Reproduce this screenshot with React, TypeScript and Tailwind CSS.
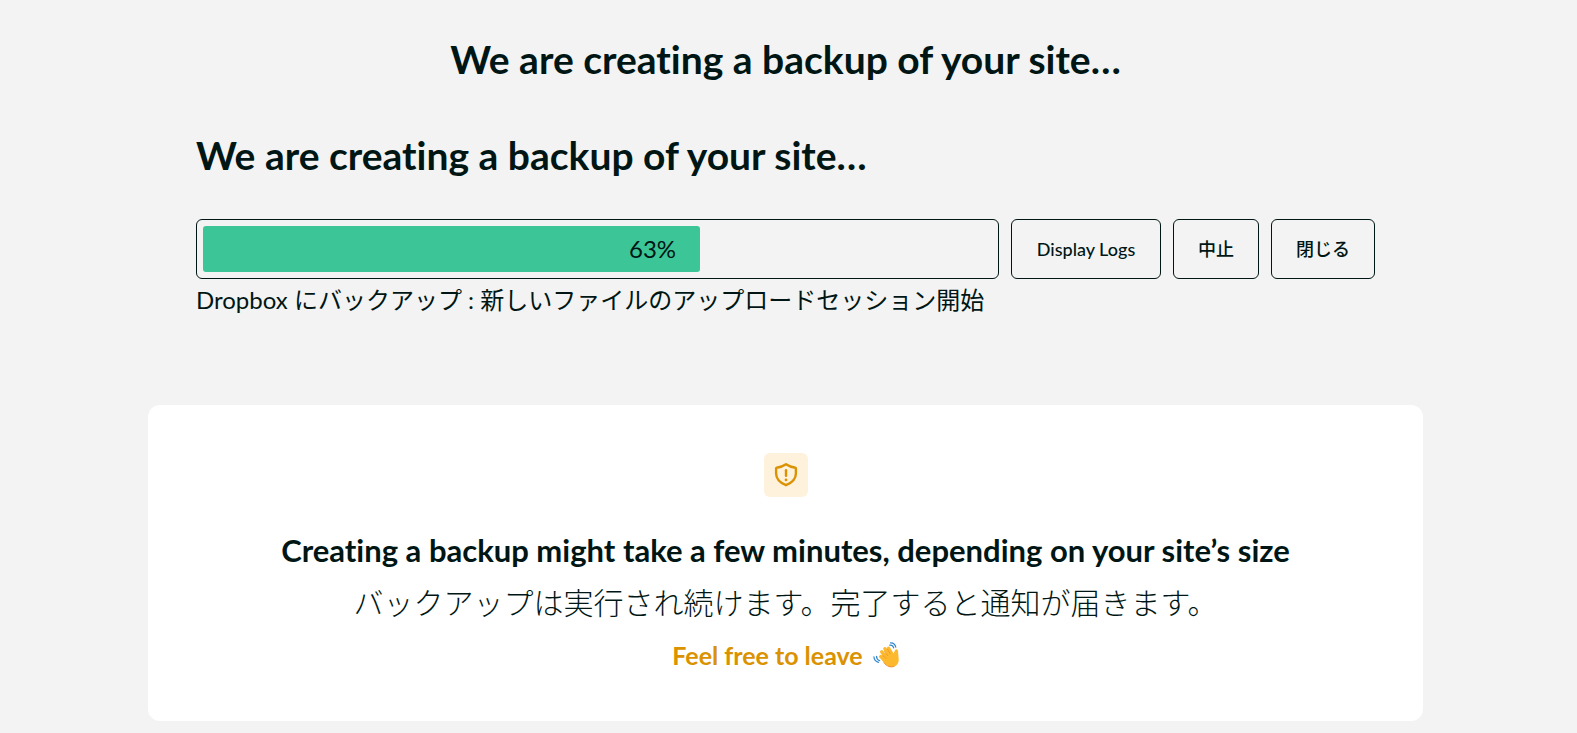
import React from 'react'

const progress = 63

function ShieldIcon() {
    return (
        <svg viewBox="0 0 28 28" fill="none" stroke="currentColor" strokeWidth="2.4" strokeLinecap="round" strokeLinejoin="round" className="size-7" aria-hidden="true">
            <path d="M14 3.2C11.200 5.100 8 6.300 4.700 6.700c-.4.1-.6.4-.6.7V12.500c0 5.400 4.200 9.300 9.900 11.700 5.700-2.400 9.900-6.300 9.900-11.700V7.400c0-.3-.2-.6-.6-.7C20 6.300 16.800 5.100 14 3.200Z" />
            <path d="M14 9.200v5.600" />
            <path d="M14 18.800v.1" strokeWidth="2.800" />
        </svg>
    )
}

function WavingHand() {
    return (
        <svg viewBox="0 0 26 26" className="size-[26px]" role="img" aria-label="Waving hand">
            <g fill="#fdb92e" stroke="#fdb92e" strokeLinecap="round">
                <path d="M9 18 7.800 14.500 17.500 7.500 20.500 11.500 22 8.300c.7-1.600 2.800-1.100 3 .6l.7 8.300c.2 4.600-2.700 7.700-6.900 7.900-3.400.2-6.200-2.100-9.800-7.100Z" stroke="none" />
                <path d="M11.500 18.300 7.700 14.600M13 15 8.700 9.800M15.800 12.500 11.900 6.700M18.400 11 15.600 6.300" strokeWidth="3.400" />
            </g>
            <path d="m9.500 12.800 3.300 3.500M11.300 9.200l3.500 4.600M14.600 7.600l2.600 4" stroke="#e8912a" strokeWidth=".7" strokeLinecap="round" fill="none" />
            <path d="M11 20.800c3 3.800 6.500 4.900 9.800 3.600" stroke="#ef8f3c" strokeWidth="1" strokeLinecap="round" fill="none" />
            <path d="M16.800 3.200c2.100-.2 3.300.7 3.900 2.700M17.500.8c2.900-.1 4.700 1.500 5.300 4.400M3.500 14.300c0 2.100 1.200 3.700 3.200 4.400M.9 14.800c.2 2.800 1.800 4.800 4.600 5.600" stroke="#2f86cf" strokeWidth="1.200" strokeLinecap="round" fill="none" />
        </svg>
    )
}

function OutlineButton({ children, className = '' }: { children: React.ReactNode; className?: string }) {
    return (
        <button type="button" className={`shrink-0 rounded-md border border-[#001614] px-6 text-lg leading-6 font-medium ${className}`}>
            {children}
        </button>
    )
}

export default function App() {
    return (
        <main className="min-h-screen bg-[#f3f3f3] pt-8 pr-1.5 pb-3 font-[Lato,'Noto_Sans_CJK_JP',sans-serif] text-[#001614] [font-variant-ligatures:none]">
            <div className="mx-auto max-w-[1275px]">
                <h1 className="text-center text-[39px] leading-[54px] font-bold">We are creating a backup of your site…</h1>

                {/* Progress */}
                <section className="px-12 pt-[42px]">
                    <h2 className="text-[39px] leading-[54px] font-bold">We are creating a backup of your site…</h2>
                    <div className="mt-[37px] flex h-15 gap-3">
                        <div
                            role="progressbar"
                            aria-label="Backup progress"
                            aria-valuemin={0}
                            aria-valuemax={100}
                            aria-valuenow={progress}
                            className="min-w-0 flex-1 rounded-md border border-[#001614] p-1.5"
                        >
                            <div className="flex h-full items-center justify-end rounded-[3px] bg-[#3cc596] pr-6 text-2xl" style={{ width: `${progress}%` }}>
                                {progress}%
                            </div>
                        </div>
                        <OutlineButton className="min-w-[150px]">Display Logs</OutlineButton>
                        <OutlineButton>中止</OutlineButton>
                        <OutlineButton>閉じる</OutlineButton>
                    </div>
                    <p className="mt-1 text-2xl leading-[34px]">Dropbox にバックアップ : 新しいファイルのアップロードセッション開始</p>
                </section>

                {/* Notice card */}
                <section className="mt-[88px] flex flex-col items-center rounded-xl bg-white p-12 text-center">
                    <div className="flex size-11 items-center justify-center rounded-md bg-[#fff2dc] text-[#db9200]">
                        <ShieldIcon />
                    </div>
                    <h3 className="mt-8 text-[31px] leading-[42px] font-bold">Creating a backup might take a few minutes, depending on your site’s size</h3>
                    <p className="mt-2.5 text-3xl leading-[42px] font-light">バックアップは実行され続けます。完了すると通知が届きます。</p>
                    <p className="mt-3.5 flex items-center gap-2.5 text-[25px] leading-9 font-bold text-[#db9200]">
                        Feel free to leave
                        <WavingHand />
                    </p>
                </section>
            </div>
        </main>
    )
}
